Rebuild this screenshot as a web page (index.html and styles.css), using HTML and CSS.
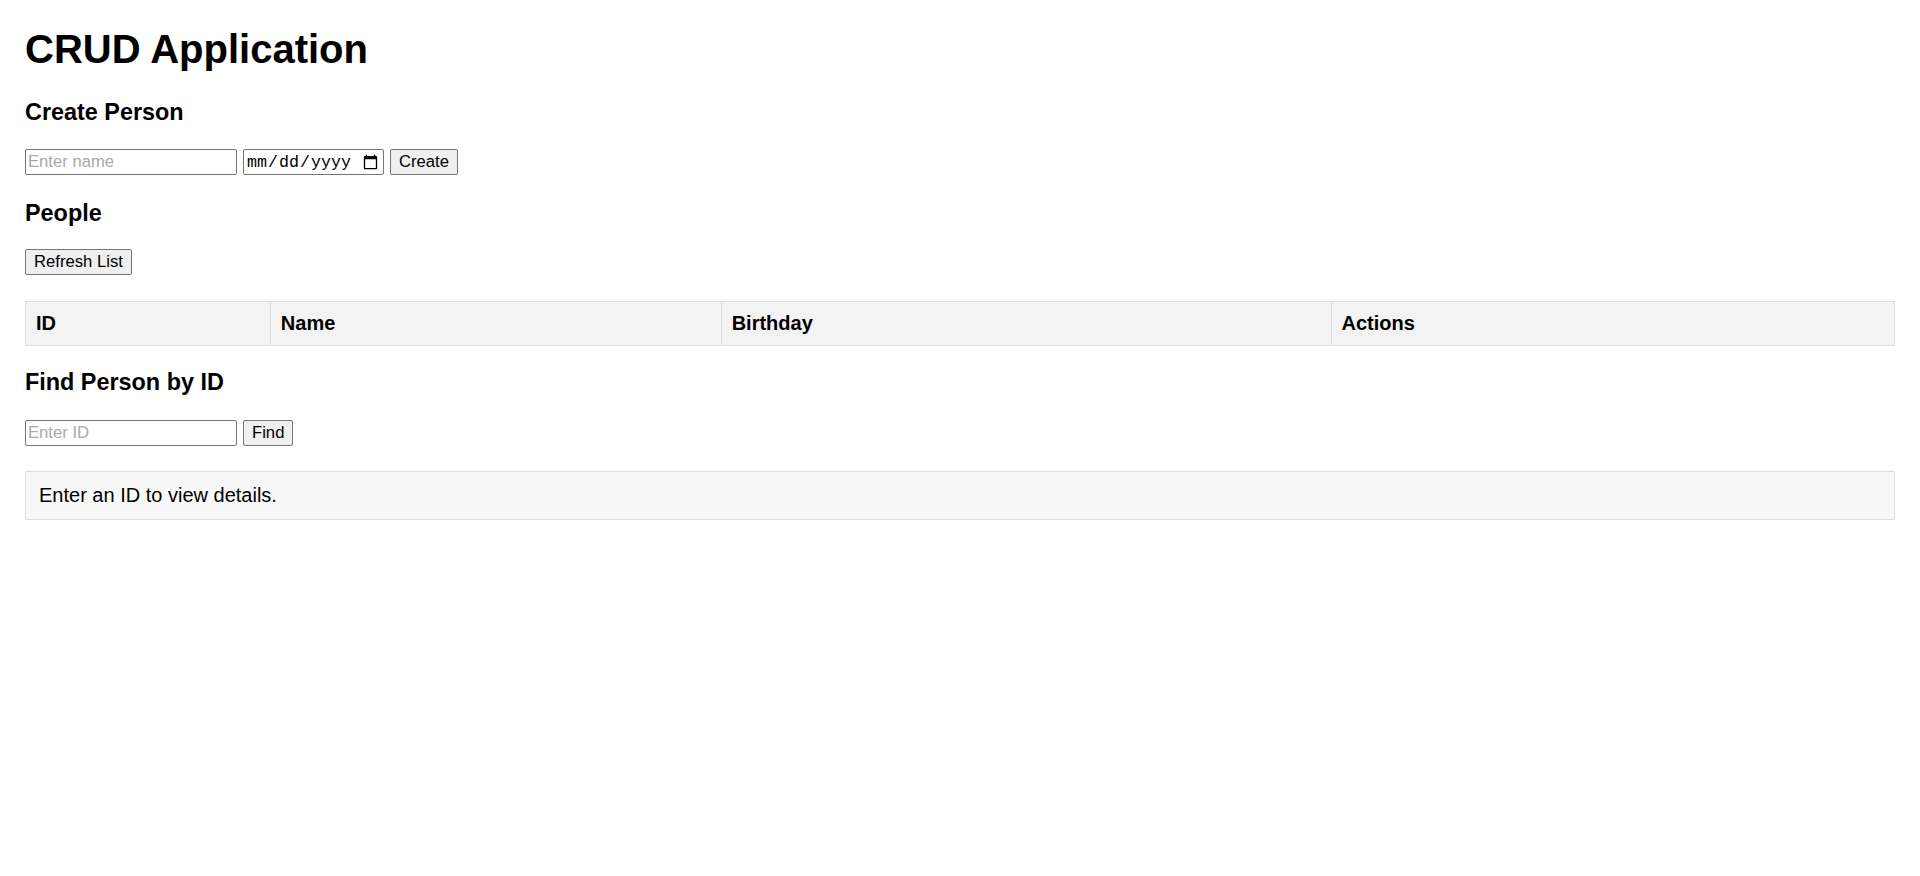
FILE: index.html
```html
<!DOCTYPE html>
<html lang="en">
<head>
<meta charset="utf-8">
<title>CRUD Application</title>
<link rel="stylesheet" href="styles.css">
</head>
<body>
<h1 class="title">CRUD Application</h1>

<h3 class="section-title create-title">Create Person</h3>
<div class="form-row create-row">
  <input class="text-input" type="text" placeholder="Enter name">
  <input class="date-input" type="date">
  <button class="btn" type="button">Create</button>
</div>

<h3 class="section-title people-title">People</h3>
<div class="form-row refresh-row">
  <button class="btn" type="button">Refresh List</button>
</div>

<table class="people-table">
  <thead>
    <tr>
      <th>ID</th>
      <th>Name</th>
      <th>Birthday</th>
      <th>Actions</th>
    </tr>
  </thead>
  <tbody></tbody>
</table>

<h3 class="section-title find-title">Find Person by ID</h3>
<div class="form-row find-row">
  <input class="text-input" type="text" placeholder="Enter ID">
  <button class="btn" type="button">Find</button>
</div>

<div class="result-box">Enter an ID to view details.</div>
</body>
</html>
```
FILE: styles.css
```css
html, body {
  background: #ffffff;
}

body {
  margin: 0;
  padding: 25px;
  font-family: "Liberation Sans", Arial, sans-serif;
  font-size: 20px;
  line-height: 23px;
  color: #000000;
}

.title {
  margin: 1px 0 27px;
  font-size: 40px;
  line-height: 46px;
  font-weight: bold;
}

.section-title {
  margin: 0;
  font-size: 23.4px;
  line-height: 27px;
  font-weight: bold;
}

.create-title { margin-bottom: 23px; }
.people-title { margin-top: 25px; margin-bottom: 22px; }
.find-title { margin-top: 23px; margin-bottom: 24px; }

.form-row {
  display: flex;
  align-items: center;
  gap: 6px;
  height: 26px;
}

.refresh-row { margin-bottom: 26px; }
.find-row { margin-bottom: 25px; }

.text-input,
.date-input,
.btn {
  box-sizing: border-box;
  height: 26px;
  margin: 0;
  border: 1px solid #767676;
  border-radius: 2px;
  font-size: 16.67px;
  color: #000000;
}

.text-input {
  width: 212px;
  padding: 1px 2px;
  font-family: "Liberation Sans", Arial, sans-serif;
  background: #ffffff;
}

.text-input::placeholder {
  color: #a9a9a9;
}

.date-input {
  width: 141px;
  padding: 1px 2px;
  font-family: "Liberation Mono", monospace;
  background: #ffffff;
}

.btn {
  padding: 0 8px;
  font-family: "Liberation Sans", Arial, sans-serif;
  background: #efefef;
}

.people-table {
  width: 100%;
  border-collapse: collapse;
}

.people-table th {
  padding: 10px;
  border: 1px solid #dddddd;
  background: #f3f3f3;
  text-align: left;
  font-size: 20px;
  line-height: 23px;
  font-weight: bold;
}

.result-box {
  padding: 12px 13px;
  border: 1px solid #dddddd;
  background: #f8f8f8;
  font-size: 20px;
  line-height: 23px;
}
```
